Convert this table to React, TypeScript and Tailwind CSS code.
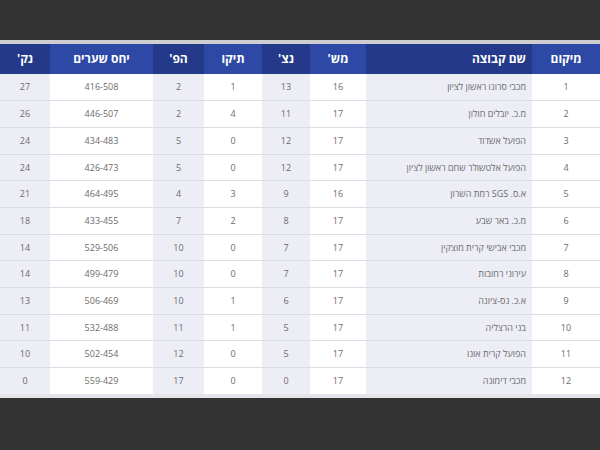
import React from 'react';

// טבלת ליגה
interface Row {
  pos: number;
  team: string;
  played: number;
  wins: number;
  draws: number;
  losses: number;
  goals: string;
  points: number;
}

const rows: Row[] = [
  { pos: 1, team: 'מכבי סרונו ראשון לציון', played: 16, wins: 13, draws: 1, losses: 2, goals: '416-508', points: 27 },
  { pos: 2, team: 'מ.כ. יובלים חולון', played: 17, wins: 11, draws: 4, losses: 2, goals: '446-507', points: 26 },
  { pos: 3, team: 'הפועל אשדוד', played: 17, wins: 12, draws: 0, losses: 5, goals: '434-483', points: 24 },
  { pos: 4, team: 'הפועל אלטשולר שחם ראשון לציון', played: 17, wins: 12, draws: 0, losses: 5, goals: '426-473', points: 24 },
  { pos: 5, team: 'א.ס. SGS רמת השרון', played: 16, wins: 9, draws: 3, losses: 4, goals: '464-495', points: 21 },
  { pos: 6, team: 'מ.כ. באר שבע', played: 17, wins: 8, draws: 2, losses: 7, goals: '433-455', points: 18 },
  { pos: 7, team: 'מכבי אבישי קרית מוצקין', played: 17, wins: 7, draws: 0, losses: 10, goals: '529-506', points: 14 },
  { pos: 8, team: 'עירוני רחובות', played: 17, wins: 7, draws: 0, losses: 10, goals: '499-479', points: 14 },
  { pos: 9, team: 'א.כ. נס-ציונה', played: 17, wins: 6, draws: 1, losses: 10, goals: '506-469', points: 13 },
  { pos: 10, team: 'בני הרצליה', played: 17, wins: 5, draws: 1, losses: 11, goals: '532-488', points: 11 },
  { pos: 11, team: 'הפועל קרית אונו', played: 17, wins: 5, draws: 0, losses: 12, goals: '502-454', points: 10 },
  { pos: 12, team: 'מכבי דימונה', played: 17, wins: 0, draws: 0, losses: 17, goals: '559-429', points: 0 },
];

const headDark = 'bg-[#24398a]';
const headLight = 'bg-[#2d49a5]';

const App: React.FC = () => {
  return (
    <div
      className="min-h-[450px] w-[600px] bg-[#333333] pt-[40px]"
      style={{ fontFamily: '"Open Sans", "DejaVu Sans", sans-serif' }}
    >
      <div className="border-t-[4px] border-[#cfcfd2] border-b-[4px] border-b-[#e4e4ea] bg-white">
        <table dir="rtl" className="w-full table-fixed border-collapse">
          <colgroup>
            <col className="w-[68px]" />
            <col className="w-[166px]" />
            <col className="w-[56px]" />
            <col className="w-[48px]" />
            <col className="w-[58px]" />
            <col className="w-[51px]" />
            <col className="w-[103px]" />
            <col className="w-[50px]" />
          </colgroup>
          <thead>
            <tr className="h-[30px] text-[12px] font-extrabold text-white">
              <th className={`${headLight} text-center`}>מיקום</th>
              <th className={`${headDark} pr-[6px] text-right`}>שם קבוצה</th>
              <th className={`${headLight} text-center`}>מש'</th>
              <th className={`${headDark} text-center`}>נצ'</th>
              <th className={`${headLight} text-center`}>תיקו</th>
              <th className={`${headDark} text-center`}>הפ'</th>
              <th className={`${headLight} text-center`}>יחס שערים</th>
              <th className={`${headDark} text-center`}>נק'</th>
            </tr>
          </thead>
          <tbody className="text-[9px] text-[#6b6b6b]">
            {rows.map((r) => (
              <tr key={r.pos} className="h-[26.7px] border-b border-[#dcdce4] last:border-b-0">
                <td className="bg-white text-center">{r.pos}</td>
                <td className="bg-[#ededf6] pr-[6px] text-right">{r.team}</td>
                <td className="bg-white text-center">{r.played}</td>
                <td className="bg-[#ededf6] text-center">{r.wins}</td>
                <td className="bg-white text-center">{r.draws}</td>
                <td className="bg-[#ededf6] text-center">{r.losses}</td>
                <td className="bg-white text-center">{r.goals}</td>
                <td className="bg-[#ededf6] text-center">{r.points}</td>
              </tr>
            ))}
          </tbody>
        </table>
      </div>
    </div>
  );
};

export default App;
